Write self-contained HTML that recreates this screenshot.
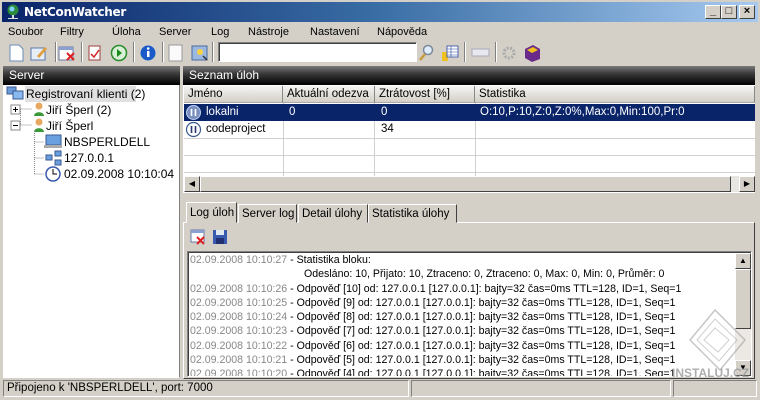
<!DOCTYPE html>
<html><head><meta charset="utf-8"><style>
*{box-sizing:border-box;margin:0;padding:0}
body{width:760px;height:400px;overflow:hidden;background:#d4d0c8;font-family:"Liberation Sans",Arial,sans-serif;font-size:11px;color:#000;position:relative}
.a{position:absolute}
.title{left:0;top:0;width:760px;height:22px;background:linear-gradient(90deg,#0a246a 0%,#3a6ea5 50%,#a6caf0 100%);border:2px solid #d4d0c8;border-bottom:none}
.title span{position:absolute;left:22px;top:3px;color:#fff;font-weight:bold;font-size:12px;font-family:"DejaVu Sans",sans-serif;letter-spacing:-0.3px}
.wb{top:5px;width:16px;height:14px;background:#d4d0c8;border:1px solid;border-color:#fff #404040 #404040 #fff;font-size:11px;line-height:11px;text-align:center;font-weight:bold}
.menu span{position:absolute;top:26px;font-size:11px}
.sep{width:2px;height:20px;border-left:1px solid #808080;border-right:1px solid #fff;top:42px}
.hdr{height:19px;background:linear-gradient(#7a7a7a,#3a3a3a 40%,#000 100%);color:#fff;font-size:12px;padding:2px 6px}
.white{background:#fff}
.lh{top:86px;height:17px;background:linear-gradient(#f4f4f2,#d4d0c8);border-right:1px solid #888;border-bottom:1px solid #aaa;padding:2px 4px;font-size:11.5px;white-space:nowrap}
.row{height:17px;font-size:11.5px;padding:2px 3px;white-space:nowrap}
.vl{width:1px;background:#d0d0d0}
.hl{height:1px;background:#d0d0d0}
.tab{top:204px;height:19px;border:1px solid;border-color:#fff #404040 transparent #fff;font-size:11.5px;padding:3px 3px;background:#d4d0c8;white-space:nowrap;overflow:hidden}
.log div{height:14.3px;white-space:nowrap;font-size:10.6px}
.log .d{color:#888}
.stat{top:380px;height:17px;border:1px solid;border-color:#808080 #fff #fff #808080;padding:1px 3px;font-size:11.5px}
.tree span{position:absolute;font-size:12px;white-space:nowrap}
</style></head><body>
<div class="a title"><span>NetConWatcher</span>
<svg class="a" style="left:4px;top:2px" width="15" height="16"><circle cx="7" cy="6" r="5.5" fill="#2a8a3a"/><circle cx="6" cy="5" r="2.5" fill="#7fd0ff"/><rect x="6" y="11" width="2" height="4" fill="#ddd"/><rect x="2" y="14" width="10" height="1" fill="#ddd"/></svg>
</div>
<div class="a wb" style="left:705px">_</div><div class="a wb" style="left:721px">□</div><div class="a wb" style="left:739px">×</div>
<div class="a menu" style="left:0;top:0"><span style="left:8px">Soubor</span><span style="left:60px">Filtry</span><span style="left:112px">Úloha</span><span style="left:159px">Server</span><span style="left:211px">Log</span><span style="left:248px">Nástroje</span><span style="left:310px">Nastavení</span><span style="left:377px">Nápověda</span></div>
<svg class="a" style="left:0;top:40px" width="560" height="24">
<path d="M10 5h9l4 4v12H10z" fill="#fff" stroke="#6a8cb8"/>
<rect x="31" y="8" width="14" height="12" fill="#e8eef8" stroke="#5a7ab0"/><path d="M37 16l8-9 2 2-8 9z" fill="#e0a040"/>
<rect x="59" y="7" width="14" height="13" fill="#fff" stroke="#6a7aa0"/><rect x="59" y="7" width="14" height="3" fill="#8aa0d0"/><path d="M67 13l7 7M74 13l-7 7" stroke="#e02020" stroke-width="2"/>
<rect x="89" y="6" width="11" height="14" fill="#fff" stroke="#a04040"/><path d="M91 14l3 3 5-7" stroke="#d02020" stroke-width="1.5" fill="none"/>
<circle cx="119" cy="13" r="7.5" fill="#d8f0d8" stroke="#2a8a2a" stroke-width="1.5"/><path d="M117 9l5 4-5 4z" fill="#1a8a1a"/>
<circle cx="148" cy="13" r="7.5" fill="#1a5ac8"/><rect x="147" y="11" width="2.5" height="6" fill="#fff"/><circle cx="148.2" cy="8.5" r="1.3" fill="#fff"/>
<rect x="169" y="5" width="13" height="16" fill="#fafafa" stroke="#999"/>
<rect x="192" y="6" width="15" height="14" fill="#9ab8e0" stroke="#4a6aa0"/><circle cx="200" cy="12" r="3" fill="#ffd040"/><path d="M203 16l4 4" stroke="#333" stroke-width="1.5"/>
<circle cx="428" cy="10" r="4.5" fill="#dfeefa" stroke="#7a8a9a" stroke-width="1.5"/><path d="M425 14l-5 6" stroke="#c89a40" stroke-width="2.5"/>
<rect x="442" y="12" width="6" height="9" fill="#f0c020"/><rect x="447" y="6" width="11" height="11" fill="#fff" stroke="#2a4aa0" stroke-width=".8"/><path d="M447 9h11M447 12h11M447 15h11M451 6v11" stroke="#2a4aa0" stroke-width=".6"/>
<rect x="472" y="9" width="17" height="7" fill="#e8e8f0" stroke="#aab"/>
<circle cx="509" cy="13" r="5" fill="none" stroke="#aaa" stroke-width="3" stroke-dasharray="2 1.5"/>
<path d="M525 9l8-4 7 4v10l-8 3-7-4z" fill="#6a2a8a"/><path d="M527 10l6-3 5 3-6 3z" fill="#f0c020"/>
</svg>
<div class="a sep" style="left:55px"></div><div class="a sep" style="left:81px"></div><div class="a sep" style="left:133px"></div><div class="a sep" style="left:162px"></div><div class="a sep" style="left:212px"></div><div class="a sep" style="left:464px"></div><div class="a sep" style="left:495px"></div>
<div class="a" style="left:218px;top:42px;width:199px;height:20px;background:#fff;border:1px solid;border-color:#808080 #fff #fff #808080;box-shadow:inset 1px 1px #404040"></div>
<div class="a hdr" style="left:3px;top:66px;width:177px">Server</div>
<div class="a white" style="left:3px;top:85px;width:177px;height:293px;border-right:1px solid #808080;border-bottom:1px solid #fff"></div>
<div class="a tree" style="left:0;top:0">
<div class="a" style="left:25px;top:86px;width:111px;height:16px;background:#e0e0e0"></div>
<svg class="a" style="left:6px;top:85px" width="170" height="100">
<rect x="1" y="2" width="9" height="7" fill="#6a9ad8" stroke="#3a5a90"/><rect x="7" y="6" width="10" height="8" fill="#8ab8f0" stroke="#3a5a90"/>
<path d="M14.5 24h12M14.5 24V40M14.5 40h12" stroke="#888" stroke-dasharray="1 1"/>
<rect x="5" y="20" width="9" height="9" fill="#fff" stroke="#888"/><path d="M7 24.5h5M9.5 22v5" stroke="#000"/>
<rect x="5" y="36" width="9" height="9" fill="#fff" stroke="#888"/><path d="M7 40.5h5" stroke="#000"/>
<circle cx="33" cy="21" r="3.5" fill="#e8a860"/><path d="M28 31c0-5 10-5 10 0z" fill="#3a9a3a"/>
<circle cx="33" cy="37" r="3.5" fill="#e8a860"/><path d="M28 47c0-5 10-5 10 0z" fill="#3a9a3a"/>
<path d="M28.5 46V90M28.5 57h10M28.5 73h10M28.5 89h10" stroke="#888" stroke-dasharray="1 1"/>
<rect x="40" y="50" width="15" height="10" fill="#6aa0e0" stroke="#3a5a90"/><rect x="38" y="60" width="18" height="3" fill="#aaa"/>
<rect x="40" y="70" width="6" height="5" fill="#6aa0e0" stroke="#3a5a90"/><rect x="49" y="66" width="6" height="5" fill="#6aa0e0" stroke="#3a5a90"/><rect x="49" y="75" width="6" height="5" fill="#6aa0e0" stroke="#3a5a90"/>
<circle cx="47" cy="89" r="7" fill="#fff" stroke="#3a5ab0" stroke-width="1.5"/><path d="M47 84v5h4" stroke="#000" fill="none"/>
</svg>
<span style="left:26px;top:87px">Registrovaní klienti (2)</span>
<span style="left:46px;top:103px">Jiří Šperl (2)</span>
<span style="left:46px;top:119px">Jiří Šperl</span>
<span style="left:64px;top:135px">NBSPERLDELL</span>
<span style="left:64px;top:151px">127.0.0.1</span>
<span style="left:64px;top:167px">02.09.2008 10:10:04</span>
</div>
<div class="a hdr" style="left:183px;top:66px;width:572px">Seznam úloh</div>
<div class="a white" style="left:183px;top:85px;width:572px;height:108px"></div>
<div class="a lh" style="left:184px;width:99px">Jméno</div>
<div class="a lh" style="left:283px;width:92px">Aktuální odezva</div>
<div class="a lh" style="left:375px;width:100px">Ztrátovost [%]</div>
<div class="a lh" style="left:475px;width:280px">Statistika</div>
<div class="a vl" style="left:283px;top:103px;height:74px"></div><div class="a vl" style="left:374px;top:103px;height:74px"></div><div class="a vl" style="left:475px;top:103px;height:74px"></div>
<div class="a hl" style="left:184px;top:138px;width:571px"></div><div class="a hl" style="left:184px;top:155px;width:571px"></div><div class="a hl" style="left:184px;top:172px;width:571px"></div>
<div class="a" style="left:184px;top:104px;width:571px;height:17px;background:#0a246a"></div>
<div class="a row" style="left:203px;top:104px;color:#fff">lokalni</div>
<div class="a row" style="left:286px;top:104px;color:#fff">0</div>
<div class="a row" style="left:378px;top:104px;color:#fff">0</div>
<div class="a row" style="left:477px;top:104px;color:#fff">O:10,P:10,Z:0,Z:0%,Max:0,Min:100,Pr:0</div>
<div class="a row" style="left:203px;top:121px">codeproject</div>
<div class="a row" style="left:378px;top:121px">34</div>
<svg class="a" style="left:185px;top:104px" width="18" height="34"><circle cx="8.5" cy="8.5" r="7" fill="#7a90c0" stroke="#c0d0f0"/><path d="M6.5 5v7M10.5 5v7" stroke="#fff" stroke-width="1.6"/><circle cx="8.5" cy="25.5" r="7" fill="#fff" stroke="#3a5a90" stroke-width="1.2"/><path d="M6.5 22v7M10.5 22v7" stroke="#2a3a70" stroke-width="1.6"/></svg>
<div class="a" style="left:184px;top:176px;width:571px;height:16px;background:#e8e6e0"></div>
<div class="a" style="left:184px;top:176px;width:16px;height:16px;background:#d4d0c8;border:1px solid;border-color:#fff #404040 #404040 #fff;font-size:8px;text-align:center;line-height:14px">◀</div>
<div class="a" style="left:200px;top:176px;width:531px;height:16px;background:#d4d0c8;border:1px solid;border-color:#fff #404040 #404040 #fff"></div>
<div class="a" style="left:739px;top:176px;width:16px;height:16px;background:#d4d0c8;border:1px solid;border-color:#fff #404040 #404040 #fff;font-size:8px;text-align:center;line-height:14px">▶</div>
<div class="a" style="left:183px;top:222px;width:572px;height:157px;border:1px solid;border-color:#fff #404040 #404040 #fff"></div>
<div class="a tab" style="left:186px;top:202px;height:21px;width:51px;z-index:2;border-bottom:1px solid #d4d0c8;padding-top:4px">Log úloh</div>
<div class="a tab" style="left:238px;width:59px">Server log</div>
<div class="a tab" style="left:298px;width:70px">Detail úlohy</div>
<div class="a tab" style="left:368px;width:89px">Statistika úlohy</div>
<svg class="a" style="left:188px;top:227px" width="44" height="20"><rect x="3" y="3" width="13" height="12" fill="#fff" stroke="#6a7aa0"/><rect x="3" y="3" width="13" height="3" fill="#8aa0d0"/><path d="M9 10l7 7M16 10l-7 7" stroke="#e02020" stroke-width="2"/><rect x="25" y="3" width="14" height="14" fill="#3a5ab0"/><rect x="28" y="3" width="8" height="5" fill="#e0e8f0"/><rect x="28" y="11" width="8" height="6" fill="#203070"/></svg>
<div class="a white log" style="left:187px;top:251px;width:565px;height:126px;border:1px solid;border-color:#808080 #fff #fff #808080;box-shadow:inset 1px 1px #404040;padding:2px 0 0 2px;overflow:hidden">
<div><span class="d">02.09.2008 10:10:27</span> - Statistika bloku:</div>
<div style="padding-left:114px">Odesláno: 10, Přijato: 10, Ztraceno: 0, Ztraceno: 0, Max: 0, Min: 0, Průměr: 0</div>
<div><span class="d">02.09.2008 10:10:26</span> - Odpověď [10] od: 127.0.0.1 [127.0.0.1]: bajty=32 čas=0ms TTL=128, ID=1, Seq=1</div>
<div><span class="d">02.09.2008 10:10:25</span> - Odpověď [9] od: 127.0.0.1 [127.0.0.1]: bajty=32 čas=0ms TTL=128, ID=1, Seq=1</div>
<div><span class="d">02.09.2008 10:10:24</span> - Odpověď [8] od: 127.0.0.1 [127.0.0.1]: bajty=32 čas=0ms TTL=128, ID=1, Seq=1</div>
<div><span class="d">02.09.2008 10:10:23</span> - Odpověď [7] od: 127.0.0.1 [127.0.0.1]: bajty=32 čas=0ms TTL=128, ID=1, Seq=1</div>
<div><span class="d">02.09.2008 10:10:22</span> - Odpověď [6] od: 127.0.0.1 [127.0.0.1]: bajty=32 čas=0ms TTL=128, ID=1, Seq=1</div>
<div><span class="d">02.09.2008 10:10:21</span> - Odpověď [5] od: 127.0.0.1 [127.0.0.1]: bajty=32 čas=0ms TTL=128, ID=1, Seq=1</div>
<div><span class="d">02.09.2008 10:10:20</span> - Odpověď [4] od: 127.0.0.1 [127.0.0.1]: bajty=32 čas=0ms TTL=128, ID=1, Seq=1</div>
</div>
<div class="a" style="left:735px;top:253px;width:16px;height:123px;background:#ece9e4"></div>
<div class="a" style="left:735px;top:253px;width:16px;height:16px;background:#d4d0c8;border:1px solid;border-color:#fff #404040 #404040 #fff;font-size:8px;text-align:center;line-height:14px">▲</div>
<div class="a" style="left:735px;top:269px;width:16px;height:60px;background:#d4d0c8;border:1px solid;border-color:#fff #404040 #404040 #fff"></div>
<div class="a" style="left:735px;top:360px;width:16px;height:16px;background:#d4d0c8;border:1px solid;border-color:#fff #404040 #404040 #fff;font-size:8px;text-align:center;line-height:14px">▼</div>
<svg class="a" style="left:670px;top:300px" width="90" height="80" opacity="0.55"><path d="M20 40l25-30 30 30-25 30z" fill="none" stroke="#999" stroke-width="1.5"/><path d="M27 40l18-21 22 21-18 21zM34 40l11-12 14 12-11 12z" fill="none" stroke="#aaa"/></svg>
<div class="a" style="left:672px;top:366px;color:#999;font-size:12px;font-weight:bold;opacity:.8">INSTALUJ.CZ</div>
<div class="a stat" style="left:3px;width:406px">Připojeno k 'NBSPERLDELL', port: 7000</div>
<div class="a stat" style="left:411px;width:260px"></div>
<div class="a stat" style="left:673px;width:84px"></div>
</body></html>
